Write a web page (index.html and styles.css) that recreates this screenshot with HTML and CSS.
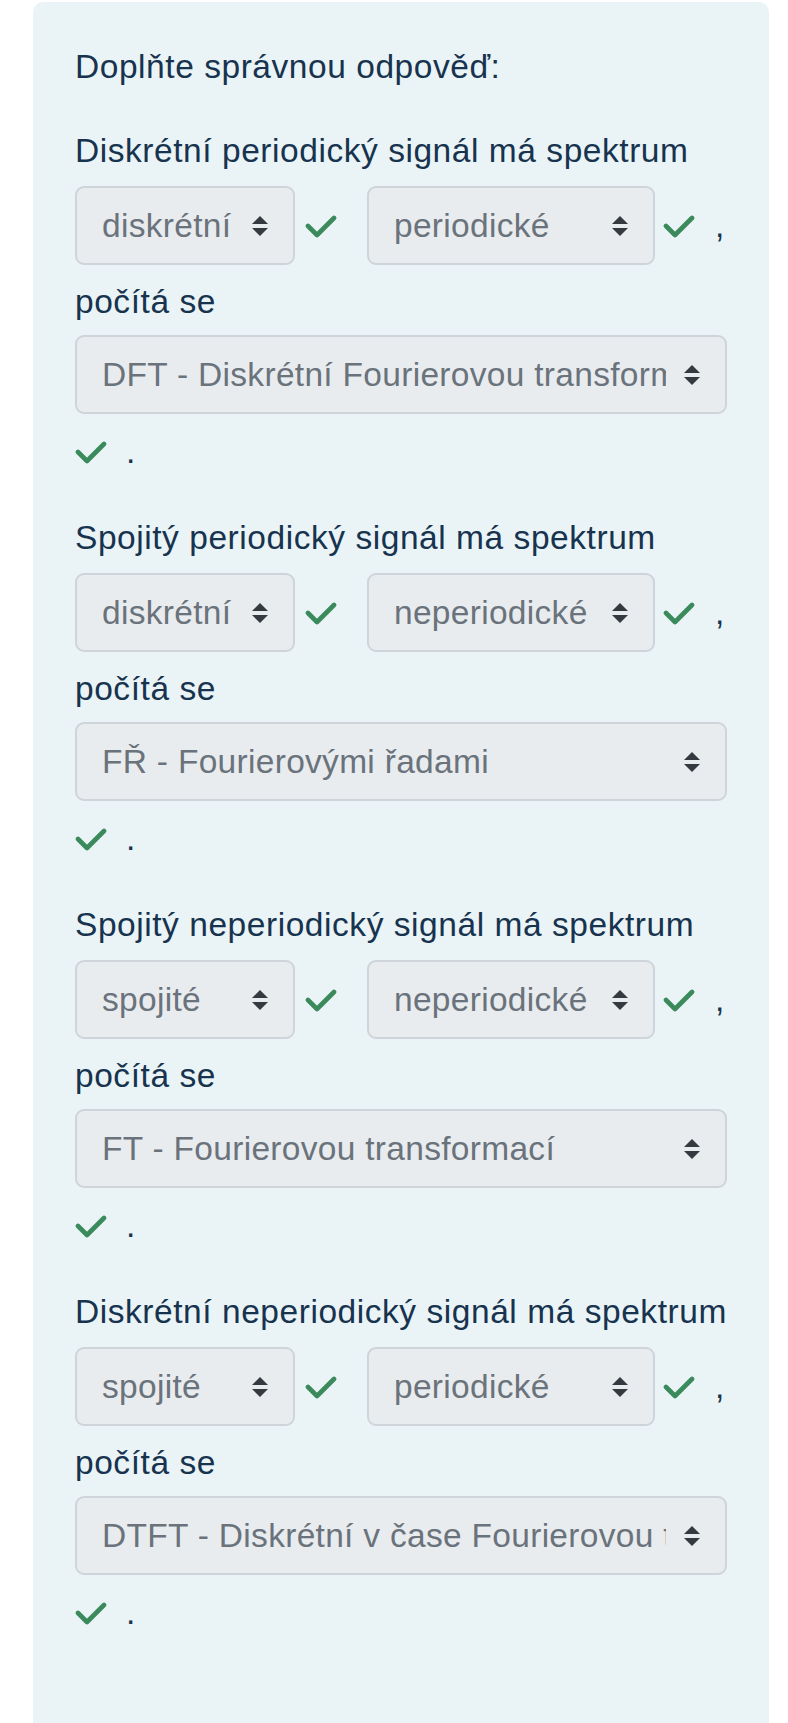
FILE: index.html
```html
<!DOCTYPE html>
<html lang="cs">
<head>
<meta charset="utf-8">
<title>Doplňte správnou odpověď</title>
<link rel="stylesheet" href="styles.css">
</head>
<body>
<div class="panel">
  <p class="title">Doplňte správnou odpověď:</p>

  <div class="q">
    <p class="lead">Diskrétní periodický signál má spektrum</p>
    <div class="row">
      <div class="sel s1"><span class="val">diskrétní</span><svg class="arr" viewBox="0 0 18 22"><path d="M9 1 L17 9 H1 Z M9 21 L1 13 H17 Z"/></svg></div>
      <svg class="chk c1" viewBox="0 0 32 24"><path d="M3 12 L12 21 L29 4"/></svg>
      <div class="sel s2"><span class="val">periodické</span><svg class="arr" viewBox="0 0 18 22"><path d="M9 1 L17 9 H1 Z M9 21 L1 13 H17 Z"/></svg></div>
      <svg class="chk c2" viewBox="0 0 32 24"><path d="M3 12 L12 21 L29 4"/></svg>
      <span class="comma">,</span>
    </div>
    <p class="label">počítá se</p>
    <div class="sel wide"><span class="val">DFT - Diskrétní Fourierovou transformací</span><svg class="arr" viewBox="0 0 18 22"><path d="M9 1 L17 9 H1 Z M9 21 L1 13 H17 Z"/></svg></div>
    <div class="end"><svg class="chk" viewBox="0 0 32 24"><path d="M3 12 L12 21 L29 4"/></svg><span class="dot">.</span></div>
  </div>

  <div class="q">
    <p class="lead">Spojitý periodický signál má spektrum</p>
    <div class="row">
      <div class="sel s1"><span class="val">diskrétní</span><svg class="arr" viewBox="0 0 18 22"><path d="M9 1 L17 9 H1 Z M9 21 L1 13 H17 Z"/></svg></div>
      <svg class="chk c1" viewBox="0 0 32 24"><path d="M3 12 L12 21 L29 4"/></svg>
      <div class="sel s2"><span class="val">neperiodické</span><svg class="arr" viewBox="0 0 18 22"><path d="M9 1 L17 9 H1 Z M9 21 L1 13 H17 Z"/></svg></div>
      <svg class="chk c2" viewBox="0 0 32 24"><path d="M3 12 L12 21 L29 4"/></svg>
      <span class="comma">,</span>
    </div>
    <p class="label">počítá se</p>
    <div class="sel wide"><span class="val">FŘ - Fourierovými řadami</span><svg class="arr" viewBox="0 0 18 22"><path d="M9 1 L17 9 H1 Z M9 21 L1 13 H17 Z"/></svg></div>
    <div class="end"><svg class="chk" viewBox="0 0 32 24"><path d="M3 12 L12 21 L29 4"/></svg><span class="dot">.</span></div>
  </div>

  <div class="q">
    <p class="lead">Spojitý neperiodický signál má spektrum</p>
    <div class="row">
      <div class="sel s1"><span class="val">spojité</span><svg class="arr" viewBox="0 0 18 22"><path d="M9 1 L17 9 H1 Z M9 21 L1 13 H17 Z"/></svg></div>
      <svg class="chk c1" viewBox="0 0 32 24"><path d="M3 12 L12 21 L29 4"/></svg>
      <div class="sel s2"><span class="val">neperiodické</span><svg class="arr" viewBox="0 0 18 22"><path d="M9 1 L17 9 H1 Z M9 21 L1 13 H17 Z"/></svg></div>
      <svg class="chk c2" viewBox="0 0 32 24"><path d="M3 12 L12 21 L29 4"/></svg>
      <span class="comma">,</span>
    </div>
    <p class="label">počítá se</p>
    <div class="sel wide"><span class="val">FT - Fourierovou transformací</span><svg class="arr" viewBox="0 0 18 22"><path d="M9 1 L17 9 H1 Z M9 21 L1 13 H17 Z"/></svg></div>
    <div class="end"><svg class="chk" viewBox="0 0 32 24"><path d="M3 12 L12 21 L29 4"/></svg><span class="dot">.</span></div>
  </div>

  <div class="q">
    <p class="lead">Diskrétní neperiodický signál má spektrum</p>
    <div class="row">
      <div class="sel s1"><span class="val">spojité</span><svg class="arr" viewBox="0 0 18 22"><path d="M9 1 L17 9 H1 Z M9 21 L1 13 H17 Z"/></svg></div>
      <svg class="chk c1" viewBox="0 0 32 24"><path d="M3 12 L12 21 L29 4"/></svg>
      <div class="sel s2"><span class="val">periodické</span><svg class="arr" viewBox="0 0 18 22"><path d="M9 1 L17 9 H1 Z M9 21 L1 13 H17 Z"/></svg></div>
      <svg class="chk c2" viewBox="0 0 32 24"><path d="M3 12 L12 21 L29 4"/></svg>
      <span class="comma">,</span>
    </div>
    <p class="label">počítá se</p>
    <div class="sel wide"><span class="val">DTFT - Diskrétní v čase Fourierovou transformací</span><svg class="arr" viewBox="0 0 18 22"><path d="M9 1 L17 9 H1 Z M9 21 L1 13 H17 Z"/></svg></div>
    <div class="end"><svg class="chk" viewBox="0 0 32 24"><path d="M3 12 L12 21 L29 4"/></svg><span class="dot">.</span></div>
  </div>
</div>
</body>
</html>
```

FILE: styles.css
```css
html, body {
  margin: 0;
  padding: 0;
  background: #ffffff;
}

body {
  font-family: "Liberation Sans", Arial, sans-serif;
}

.panel {
  margin: 2px 19px 0 33px;
  min-height: 1721px;
  box-sizing: border-box;
  padding: 40px 42px 0 42px;
  background: #eaf4f7;
  border-radius: 10px 10px 0 0;
  color: #17334e;
  font-size: 33.5px;
  line-height: 49px;
  letter-spacing: 0.55px;
}

.panel p {
  margin: 0;
}

.title {
  margin-bottom: 35px !important;
}

.q {
  margin-bottom: 37px;
}

.row {
  display: flex;
  align-items: center;
  margin-top: 11px;
  height: 79px;
}

.label {
  margin-top: 12px !important;
}

.sel {
  display: flex;
  align-items: center;
  box-sizing: border-box;
  height: 79px;
  background: #e9ecef;
  border: 2px solid #ced4da;
  border-radius: 9px;
  color: #6a737b;
  padding-left: 25px;
  overflow: hidden;
  letter-spacing: 0.3px;
}

.sel .val {
  white-space: nowrap;
  overflow: hidden;
  flex: 1 1 auto;
  min-width: 0;
}

.sel .arr {
  flex: 0 0 18px;
  width: 18px;
  height: 22px;
  margin-right: 24px;
  margin-left: 8px;
  fill: #343a40;
}

.s1 {
  width: 220px;
}

.s2 {
  width: 288px;
}

.wide {
  width: 100%;
  margin-top: 9px;
}

.wide .val {
  margin-right: 9px;
}

.chk {
  width: 32px;
  height: 24px;
  flex: 0 0 32px;
  fill: none;
  stroke: #3b8a5c;
  stroke-width: 4.6;
  stroke-linecap: round;
  stroke-linejoin: round;
}

.c1 {
  margin-left: 10px;
  margin-right: 30px;
}

.c2 {
  margin-left: 8px;
}

.comma {
  margin-left: 20px;
  color: #17334e;
}

.end {
  display: flex;
  align-items: center;
  height: 49px;
  margin-top: 13px;
}

.end .dot {
  margin-left: 19px;
}
```
